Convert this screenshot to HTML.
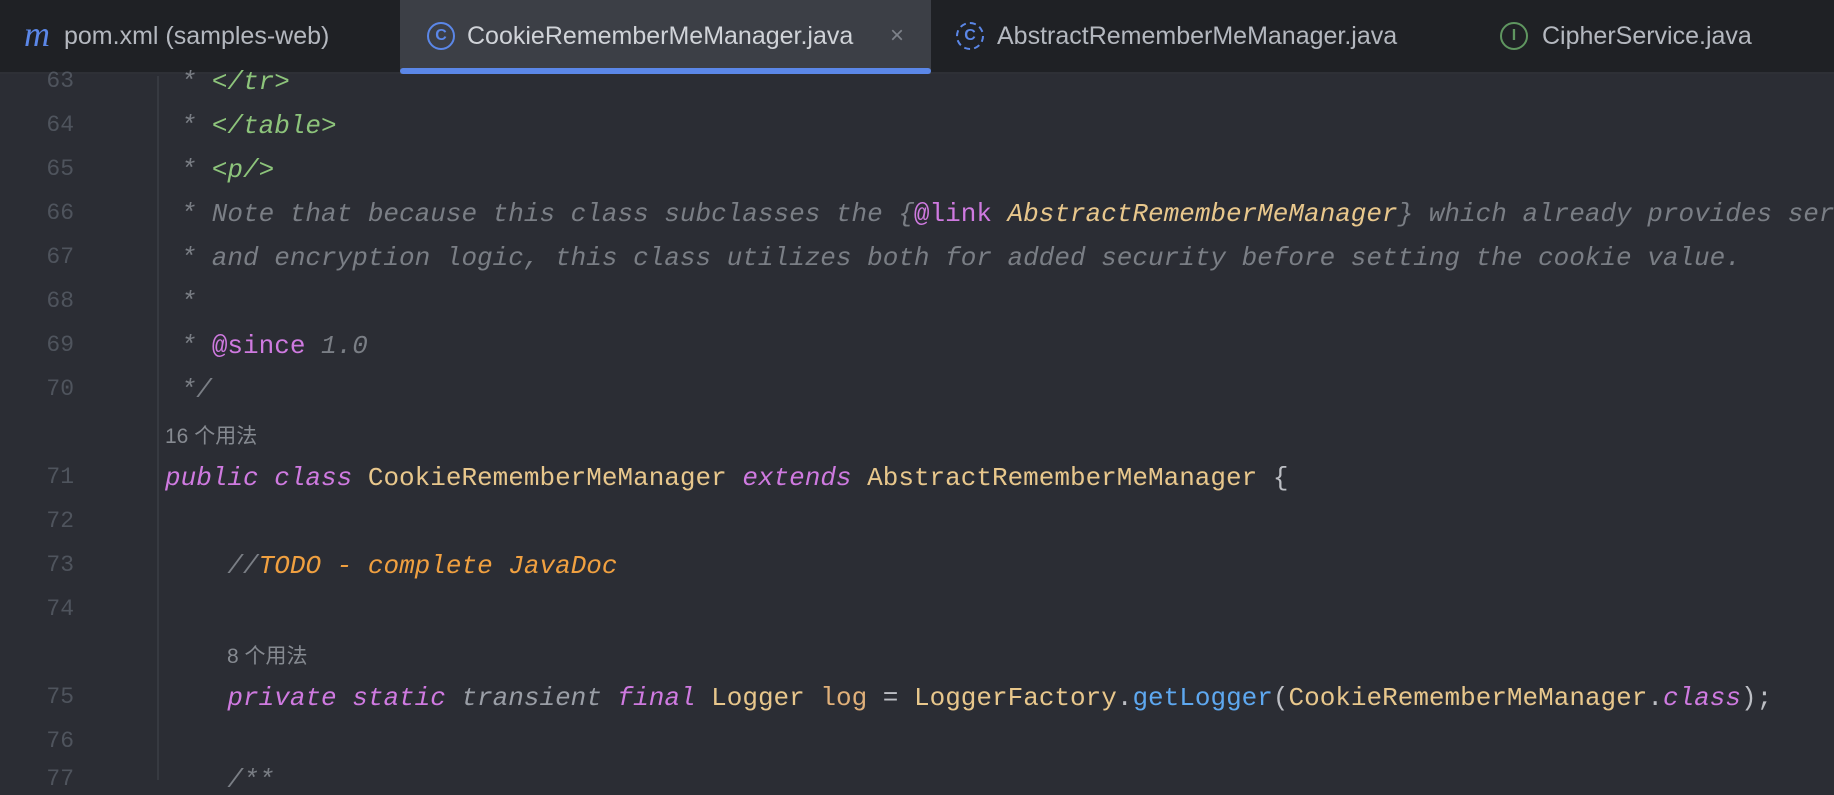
<!DOCTYPE html>
<html><head><meta charset="utf-8"><style>
*{margin:0;padding:0;box-sizing:border-box}
body{width:1834px;height:780px;overflow:hidden;background:#2b2d34;position:relative;font-family:"Liberation Mono",monospace}
.tabs{position:absolute;left:0;top:0;width:1834px;height:74px;background:#1f2125;border-bottom:2px solid #2e3036}
.tab{position:absolute;top:0;height:74px;font:25px "Liberation Sans","Noto Sans CJK SC",sans-serif;color:#b4b8bf;line-height:72px;white-space:nowrap}
.act{left:400px;width:531px;background:#3c3f46}
.act:after{content:"";position:absolute;left:0;right:0;bottom:0;height:6px;background:#5b87e8;border-radius:3px}
.ic{position:absolute;top:22px;width:28px;height:28px;border:2.5px solid #5b87e8;border-radius:50%;font:bold 16px "Liberation Sans",sans-serif;color:#5b87e8;text-align:center;line-height:23px}
.gut{position:absolute;left:157px;top:76px;width:2px;height:704px;background:#373a41}
.ln{position:absolute;left:0;width:74px;text-align:right;color:#4f545d;font-size:23px}
.row{position:absolute;left:165px;font-size:26px;white-space:pre;color:#bcbec4;line-height:30px}
.hint{position:absolute;font:21px "Liberation Sans","Noto Sans CJK SC",sans-serif;color:#868a91}
.c{color:#7a7e85;font-style:italic}
.g{color:#8dc47b;font-style:italic}
.k{color:#cf7ae0;font-style:italic}
.y{color:#e8c78c}
.o{color:#f0a040;font-style:italic}
.b{color:#5ea8f0}
.f{color:#e0b07a}
</style></head><body>
<div class="tabs">
<div class="tab" style="left:24px"><span style="font:italic 36px 'Liberation Serif',serif;color:#5b87e8;position:absolute;left:0;top:0;line-height:68px">m</span><span style="position:absolute;left:40px">pom.xml (samples-web)</span></div>
<div class="tab act"><div class="ic" style="left:27px">C</div><span style="position:absolute;left:67px;color:#d0d3d8">CookieRememberMeManager.java</span><span style="position:absolute;left:490px;color:#7e828a;font-size:24px">×</span></div>
<div class="tab" style="left:956px"><div class="ic" style="left:0;border-style:dashed">C</div><span style="position:absolute;left:41px">AbstractRememberMeManager.java</span></div>
<div class="tab" style="left:1500px"><div class="ic" style="left:0;border-color:#5f9660;color:#5f9660">I</div><span style="position:absolute;left:42px">CipherService.java</span></div>
</div>
<div class="gut"></div>

<div class="ln" style="top:68px">63</div><div class="row" style="top:67px"><span class="c"> * </span><span class="g">&lt;/tr&gt;</span></div>
<div class="ln" style="top:112px">64</div><div class="row" style="top:111px"><span class="c"> * </span><span class="g">&lt;/table&gt;</span></div>
<div class="ln" style="top:156px">65</div><div class="row" style="top:155px"><span class="c"> * </span><span class="g">&lt;p/&gt;</span></div>
<div class="ln" style="top:200px">66</div><div class="row" style="top:199px"><span class="c"> * Note that because this class subclasses the {</span><span class="k" style="font-style:normal">@link</span><span class="c"> </span><span class="y" style="font-style:italic">AbstractRememberMeManager</span><span class="c">} which already provides ser</span></div>
<div class="ln" style="top:244px">67</div><div class="row" style="top:243px"><span class="c"> * and encryption logic, this class utilizes both for added security before setting the cookie value.</span></div>
<div class="ln" style="top:288px">68</div><div class="row" style="top:287px"><span class="c"> *</span></div>
<div class="ln" style="top:332px">69</div><div class="row" style="top:331px"><span class="c"> * </span><span class="k" style="font-style:normal">@since</span><span class="c"> 1.0</span></div>
<div class="ln" style="top:376px">70</div><div class="row" style="top:375px"><span class="c"> */</span></div>
<div class="hint" style="left:165px;top:420px">16 个用法</div>
<div class="ln" style="top:464px">71</div><div class="row" style="top:463px"><span class="k">public class</span> <span class="y">CookieRememberMeManager</span> <span class="k">extends</span> <span class="y">AbstractRememberMeManager</span> {</div>
<div class="ln" style="top:508px">72</div>
<div class="ln" style="top:552px">73</div><div class="row" style="top:551px">    <span class="c">//</span><span class="o">TODO - complete JavaDoc</span></div>
<div class="ln" style="top:596px">74</div>
<div class="hint" style="left:227px;top:640px">8 个用法</div>
<div class="ln" style="top:684px">75</div><div class="row" style="top:683px">    <span class="k">private static</span> <span class="c" style="color:#9a9ea6">transient</span> <span class="k">final</span> <span class="y">Logger</span> <span class="f">log</span> = <span class="y">LoggerFactory</span>.<span class="b">getLogger</span>(<span class="y">CookieRememberMeManager</span>.<span class="k">class</span>);</div>
<div class="ln" style="top:728px">76</div>
<div class="ln" style="top:766px">77</div><div class="row" style="top:765px">    <span class="c">/**</span></div>
</body></html>
